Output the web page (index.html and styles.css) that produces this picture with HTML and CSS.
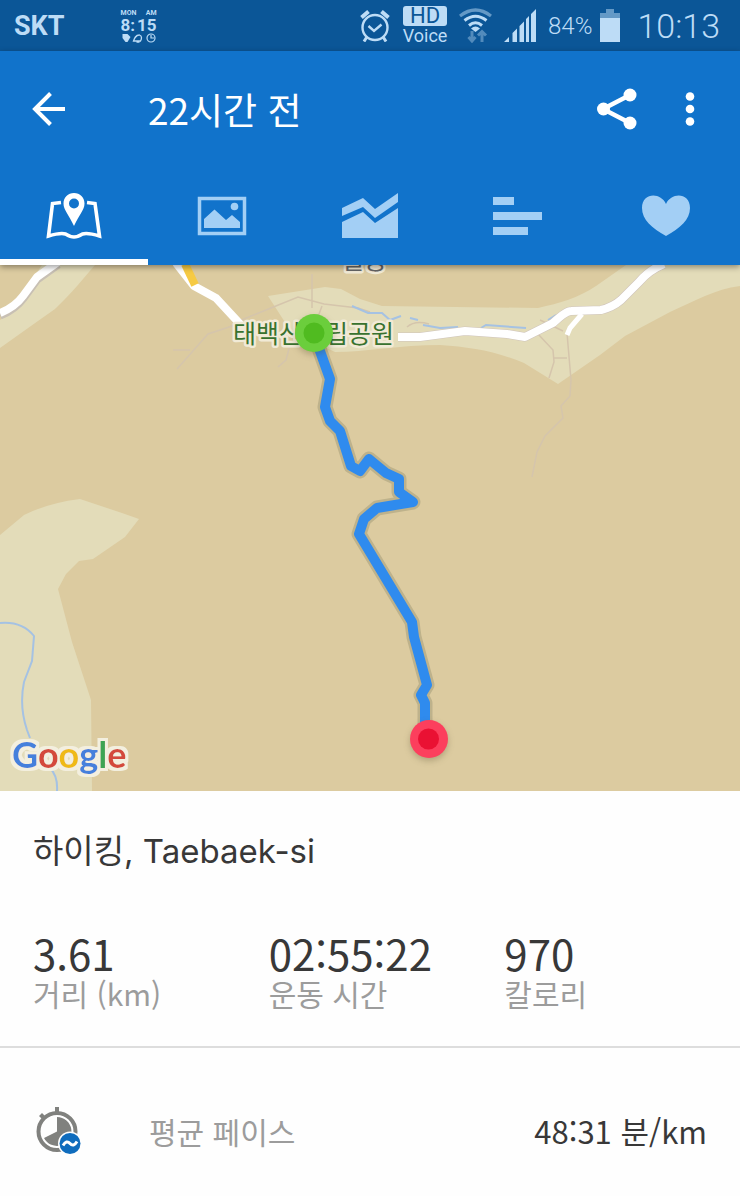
FILE: index.html
```html
<!DOCTYPE html>
<html lang="ko">
<head>
<meta charset="utf-8">
<meta name="viewport" content="width=device-width, initial-scale=1">
<title>22시간 전</title>
<link rel="stylesheet" href="styles.css">
</head>
<body>
<div class="status-bar">
  <span class="carrier">SKT</span>
  <div class="mini-clock">
    <div class="mini-row mini-small"><span>MON</span><span>AM</span></div>
    <div class="mini-row mini-time"><span>8:</span><span>15</span></div>
    <svg class="mini-icons" viewBox="0 0 35 10" aria-hidden="true">
      <path d="M1 1h5l3 3-3 5H4L1 5z" fill="currentColor"/>
      <path d="M12 8c1-3 2-6 6-6 3 1 2 4 1 6zM15 9h3" fill="none" stroke="currentColor" stroke-width="1.3"/>
      <circle cx="29.500" cy="5" r="4" fill="none" stroke="currentColor" stroke-width="1.2"/>
      <path d="M29.500 2v3h3" fill="none" stroke="currentColor" stroke-width="1.200"/>
    </svg>
  </div>
  <div class="status-right">
    <svg class="alarm" viewBox="0 0 30 32" fill="none" stroke="currentColor" aria-hidden="true">
      <circle cx="15" cy="17.500" r="12.500" stroke-width="2.400"/>
      <path d="M8.500 16l5.500 5 7.500-6.500" stroke-width="2.400"/>
      <path d="M1.500 7.500l7-6M28.500 7.500l-7-6" stroke-width="4"/>
      <path d="M6.500 27.500l-2.500 4M23.500 27.500l2.500 4" stroke-width="3"/>
    </svg>
    <div class="hd-voice"><span class="hd">HD</span><span class="voice">Voice</span></div>
    <svg class="wifi" viewBox="0 0 33 35" fill="none" stroke="currentColor" aria-hidden="true">
      <path d="M1 8Q16.500-4 32 8" stroke-width="3.200" opacity=".5"/>
      <path d="M5.500 12.500Q16.500 4 27.500 12.500M10 17.500Q16.500 12 23 17.500" stroke-width="3"/>
      <path d="M12 20.500q4.500-4 9 0l-4.500 3.500z" fill="currentColor" stroke="none"/>
      <path d="M13 23v10M9.500 29l3.500 4 3.500-4M23 34V24M19 27.500l4-4 4 4" stroke-width="3" opacity=".4"/>
    </svg>
    <svg class="signal" viewBox="0 0 32 33" fill="currentColor" aria-hidden="true">
      <path d="M0 33l5-5v5zM8.500 33v-9l4.500-4.500V33zM15.500 33V17l4.500-4.500V33zM22 33V10l3-3v26zM27 33V5l5-5v33z"/>
    </svg>
    <span class="percent">84%</span>
    <svg class="battery" viewBox="0 0 20 33" aria-hidden="true">
      <path d="M6 0h8v4h6v5H0V4h6z" fill="currentColor" opacity=".5"/>
      <path d="M0 9h20v24H0z" fill="currentColor"/>
    </svg>
    <span class="clock">10:13</span>
  </div>
</div>

<header class="header">
  <div class="app-bar">
    <button class="icon-button" type="button" aria-label="뒤로">
      <svg class="back" viewBox="0 0 34 34" fill="none" stroke="currentColor" stroke-width="4" aria-hidden="true"><path d="M33 17H3M18.500 1.500L3 17l15.500 15.500"/></svg>
    </button>
    <h1 class="title">22시간 전</h1>
    <button class="icon-button" type="button" aria-label="공유">
      <svg class="share" viewBox="0 0 40 42" fill="currentColor" aria-hidden="true"><path d="M33 7L6 21l27 14" fill="none" stroke="currentColor" stroke-width="4.500"/><circle cx="33" cy="7" r="6.500"/><circle cx="6.500" cy="21" r="6.500"/><circle cx="33" cy="35" r="6.500"/></svg>
    </button>
    <button class="icon-button" type="button" aria-label="메뉴">
      <svg class="more" viewBox="0 0 10 34" fill="currentColor" aria-hidden="true"><circle cx="5" cy="4.500" r="4.300"/><circle cx="5" cy="17" r="4.300"/><circle cx="5" cy="29.500" r="4.300"/></svg>
    </button>
  </div>
  <nav class="tabs">
    <button class="tab tab-active" type="button" aria-label="지도">
      <svg class="tab-icon" viewBox="0 0 56 48" aria-hidden="true"><path d="M15 10.500l-8.500 1L2.500 44q12-3.500 17-2 5 3 8.500 3t8.500-3q5-1.500 17 2L49 11.500l-8-1" fill="none" stroke="currentColor" stroke-width="3.600"/><path fill-rule="evenodd" d="M28 1C22 1 17.500 5.500 17.500 11.500 17.500 18 23 23 28 34c5-11 10.500-16 10.500-22.500C38.500 5.500 34 1 28 1zm0 5.500a5 5 0 110 10 5 5 0 010-10z" fill="currentColor"/></svg>
    </button>
    <button class="tab" type="button" aria-label="사진">
      <svg class="tab-icon" viewBox="0 0 56 48" aria-hidden="true"><path d="M5.500 6.500h45v35h-45z" fill="none" stroke="currentColor" stroke-width="3.500"/><path d="M10 36V27l10.500-9.500L32 28l6-5 8 7v6z" fill="currentColor"/><circle cx="40.500" cy="14.500" r="3.800" fill="currentColor"/></svg>
    </button>
    <button class="tab" type="button" aria-label="차트">
      <svg class="tab-icon" viewBox="0 0 56 48" fill="currentColor" aria-hidden="true"><path d="M0 16L21 6l12 11L56 1v9L33 26 21 15 0 24zM0 30l21-10 12 11 23-15v30H0z"/></svg>
    </button>
    <button class="tab" type="button" aria-label="구간">
      <svg class="tab-icon" viewBox="0 0 56 48" fill="currentColor" aria-hidden="true"><path d="M3 5h21v8H3zM3 20h49v8H3zM3 35h35v8H3z"/></svg>
    </button>
    <button class="tab" type="button" aria-label="심박수">
      <svg class="tab-icon" viewBox="0 0 56 48" fill="currentColor" aria-hidden="true"><path d="M28 44C14 36 4 28 4 16 4 0 23 0 28 12 33 0 52 0 52 16 52 28 42 36 28 44z"/></svg>
    </button>
  </nav>
</header>

<main>
  <svg class="map" viewBox="0 265 740 526" role="img" aria-label="이동 경로">
    <defs>
      <filter id="halo" x="-10%" y="-20%" width="120%" height="140%">
        <feMorphology in="SourceAlpha" operator="dilate" radius="3" result="grown"/>
        <feGaussianBlur in="grown" stdDeviation="0.6" result="soft"/>
        <feFlood flood-color="#f3efdf"/>
        <feComposite in2="soft" operator="in"/>
        <feMerge><feMergeNode/><feMergeNode in="SourceGraphic"/></feMerge>
      </filter>
    </defs>
    <rect y="265" width="740" height="526" fill="#dccba0"/>
    <g fill="#e3dcb9">
      <path d="M0 320C18 308 28 285 42 265H95C82 280 73 292 55 309L38 321 0 348z"/>
      <path d="M268 296L325 287 341 289 360 299 382 306 538 308C560 303 578 298 596 286L626 265H740V286C715 289 695 301 670 312L625 336 600 355 558 384 524 363C495 351 470 347 440 345 400 345 365 352 335 352L290 330z"/>
      <path d="M0 535L24 515Q48 503 80 499L122 513 139 519 125 537 93 559 79 561 66 574 58 589 72 642 91 700 92 791H0z"/>
    </g>
    <g fill="none" stroke="#d5c5ac" stroke-width="1.500">
      <path d="M312 274V308M234 323L298 297 324 304 358 308 370 312M173 350H190M177 369L208 334 235 325M290 345L286 360 278 367M538 334L553 350 554 362 549 378M554 358H567M567 333L571 380 570 396 561 406 563 418 545 436 537 452 532 477"/>
      <path d="M540 320L563 331M322 306L315 325M407 327Q415 320 429 324"/>
    </g>
    <g fill="none" stroke="#a5c2e3" stroke-width="2">
      <path d="M352 306L368 313 382 313 390 320 401 316M410 318L418 320M423 325L440 328 458 327M481 328L486 325 526 328M548 320L556 315"/>
      <path d="M0 623Q22 621 34 636L32 661 24 682Q19 706 27 730L30 738M50 768Q58 776 57 791"/>
    </g>
    <g fill="none" stroke-linejoin="round">
      <path d="M0 315Q15 309 23 298L37 279 58 264" stroke="#c8c0b4" stroke-width="9"/>
      <path d="M0 313Q15 307 23 296L37 277 58 262" stroke="#fff" stroke-width="8"/>
      <path d="M176 263L194 286 216 298 241 325" stroke="#fff" stroke-width="8"/>
      <path d="M185 264L195 285" stroke="#f6ca43" stroke-width="8"/>
      <path d="M398 337H420L465 331 507 334 525 337 553 323Q566 311 571 311L601 310Q613 307 621 300L639 282Q649 270 664 264" stroke="#cfc4bb" stroke-width="9"/>
      <path d="M398 337H420L465 331 507 334 525 337 553 323Q566 311 571 311L601 310Q613 307 621 300L639 282Q649 270 664 264" stroke="#fff" stroke-width="8"/>
      <path d="M582 314L570 328 567 335" stroke="#fff" stroke-width="5"/>
    </g>
    <text class="place" x="341" y="269">혈동</text>
    <text class="place park" x="233" y="343">태백산국립공원</text>
    <g fill="none" stroke-linejoin="round">
      <path class="route-casing" d="M316 340L330 379 325 407 330 421 340 431 351 466 360 471 369 459 386 473 399 479V492L413 502 377 508 364 519 359 534 412 622 414 637 427 685 421 695 425 703V738"/>
      <path class="route" d="M316 340L330 379 325 407 330 421 340 431 351 466 360 471 369 459 386 473 399 479V492L413 502 377 508 364 519 359 534 412 622 414 637 427 685 421 695 425 703V738"/>
    </g>
    <g class="marker">
      <circle cx="314" cy="333" r="19" fill="#6bce3c"/>
      <circle cx="314" cy="333" r="10.500" fill="#50bb20"/>
    </g>
    <g class="marker">
      <circle cx="429" cy="739" r="19" fill="#fc3f5d"/>
      <circle cx="428.500" cy="739" r="10.500" fill="#ea1133"/>
    </g>
    <text class="google" x="12" y="768" filter="url(#halo)"><tspan fill="#4580dc">G</tspan><tspan fill="#d44a3b">o</tspan><tspan fill="#efba17">o</tspan><tspan fill="#4580dc">g</tspan><tspan fill="#3ca452">l</tspan><tspan fill="#d44a3b">e</tspan></text>
  </svg>

  <section class="summary">
    <h2 class="activity">하이킹, Taebaek-si</h2>
    <dl class="stats">
      <div class="stat"><dt>거리 (km)</dt><dd>3.61</dd></div>
      <div class="stat"><dt>운동 시간</dt><dd>02:55:22</dd></div>
      <div class="stat"><dt>칼로리</dt><dd>970</dd></div>
    </dl>
  </section>
  <section class="detail">
    <svg class="pace" viewBox="0 0 46 48" aria-hidden="true">
      <path d="M19 0h4v5h-4zM3 9l3-3 4 4-3 3z" fill="#80817e"/>
      <circle cx="21" cy="24.500" r="18.500" fill="none" stroke="#80817e" stroke-width="4"/>
      <path d="M21 24.500V10a14.500 14.500 0 11-13 21z" fill="#80817e"/>
      <circle cx="34" cy="36.500" r="12" fill="#fefefe"/>
      <circle cx="34" cy="36.500" r="10.500" fill="#0f6cbd"/>
      <path d="M27 38.500q3.500-6 7-2t7-2" fill="none" stroke="#fff" stroke-width="3"/>
    </svg>
    <span class="detail-label">평균 페이스</span>
    <span class="detail-value">48:31 분/km</span>
  </section>
</main>
</body>
</html>
```
FILE: styles.css
```css
* {
  box-sizing: border-box;
}

body {
  margin: 0;
  background: #fefefe;
  color: #383838;
  font-family: "Noto Sans CJK KR", sans-serif;
}

h1,
h2,
dl,
dd {
  margin: 0;
  font-weight: 400;
}

svg {
  display: block;
  flex: none;
}

button {
  padding: 0;
  border: 0;
  background: none;
  color: inherit;
  font: inherit;
}

.status-bar {
  display: flex;
  align-items: center;
  height: 51px;
  padding: 0 20px 0 14px;
  background: #0b5697;
  color: #bddcf6;
  font-family: Roboto, sans-serif;
}

.carrier {
  font-size: 27px;
  font-weight: 700;
}

.mini-clock {
  width: 36px;
  margin-left: 56px;
}

.mini-row {
  display: flex;
  justify-content: space-between;
  font-weight: 700;
}

.mini-small {
  font-size: 7px;
  line-height: 8px;
}

.mini-time {
  font-size: 17px;
  line-height: 16px;
}

.mini-icons {
  width: 36px;
  height: 10px;
}

.status-right {
  display: flex;
  align-items: center;
  margin-left: auto;
}

.alarm {
  width: 30px;
  height: 32px;
  margin-right: 13px;
}

.hd-voice {
  display: flex;
  flex-direction: column;
  align-items: center;
  width: 44px;
  margin-right: 12px;
}

.hd {
  width: 44px;
  border-radius: 3px;
  background: #bddcf6;
  color: #0b5697;
  font-size: 22px;
  line-height: 20px;
  text-align: center;
}

.voice {
  font-size: 18px;
  line-height: 20px;
}

.wifi {
  width: 33px;
  height: 35px;
  margin-right: 12px;
}

.signal {
  width: 32px;
  height: 33px;
  margin-right: 12px;
}

.percent {
  margin-right: 8px;
  font-size: 24px;
  font-weight: 300;
}

.battery {
  width: 20px;
  height: 33px;
  margin-right: 17px;
}

.clock {
  font-size: 34px;
  font-weight: 300;
}

.header {
  position: relative;
  background: #1173cb;
  color: #fff;
  box-shadow: 0 2px 6px rgba(0, 0, 0, 0.4);
}

.app-bar {
  display: flex;
  align-items: center;
  height: 116px;
  padding: 0 45px 0 32px;
}

.back {
  width: 34px;
  height: 34px;
}

.title {
  flex: 1;
  margin-left: 82px;
  font-size: 37px;
  line-height: 48px;
}

.share {
  width: 40px;
  height: 42px;
  margin-right: 48px;
}

.more {
  width: 10px;
  height: 34px;
}

.tabs {
  display: grid;
  grid-template-columns: repeat(5, 1fr);
}

.tab {
  display: flex;
  justify-content: center;
  height: 98px;
  padding-top: 25px;
  border-bottom: 6px solid transparent;
  color: #a3cff5;
}

.tab-active {
  border-color: #fff;
  color: #fff;
}

.tab-icon {
  width: 56px;
  height: 48px;
}

.map {
  width: 100%;
  height: auto;
}

.place {
  fill: #666;
  stroke: #f1ead6;
  stroke-width: 5px;
  stroke-linejoin: round;
  paint-order: stroke;
  font-size: 25px;
}

.park {
  fill: #39722f;
}

.route-casing {
  stroke: #beb28b;
  stroke-width: 15px;
}

.route {
  stroke: #2f8bee;
  stroke-width: 10px;
}

.marker {
  filter: drop-shadow(0 3px 3px rgba(80, 70, 40, 0.3));
}

.google {
  font-family: Lato, sans-serif;
  font-size: 36px;
  font-weight: 700;
}

.summary {
  padding: 36px 0 35px 33px;
  border-bottom: 2px solid #ddd;
}

.activity {
  font-family: Inter, "Noto Sans CJK KR", sans-serif;
  font-size: 33px;
  line-height: 48px;
}

.stats {
  display: grid;
  grid-template-columns: repeat(3, 1fr);
  margin-top: 56px;
}

.stat {
  display: flex;
  flex-direction: column-reverse;
}

.stat dt {
  color: #9c9c9c;
  font-size: 30px;
  line-height: 36px;
}

.stat dd {
  font-size: 42px;
  line-height: 44px;
}

.detail {
  display: flex;
  align-items: center;
  padding: 59px 33px 41px 36px;
}

.pace {
  width: 46px;
  height: 48px;
}

.detail-label {
  margin-left: 67px;
  color: #9c9c9c;
  font-size: 30px;
  line-height: 48px;
}

.detail-value {
  margin-left: auto;
  font-size: 31px;
  line-height: 48px;
}
```
